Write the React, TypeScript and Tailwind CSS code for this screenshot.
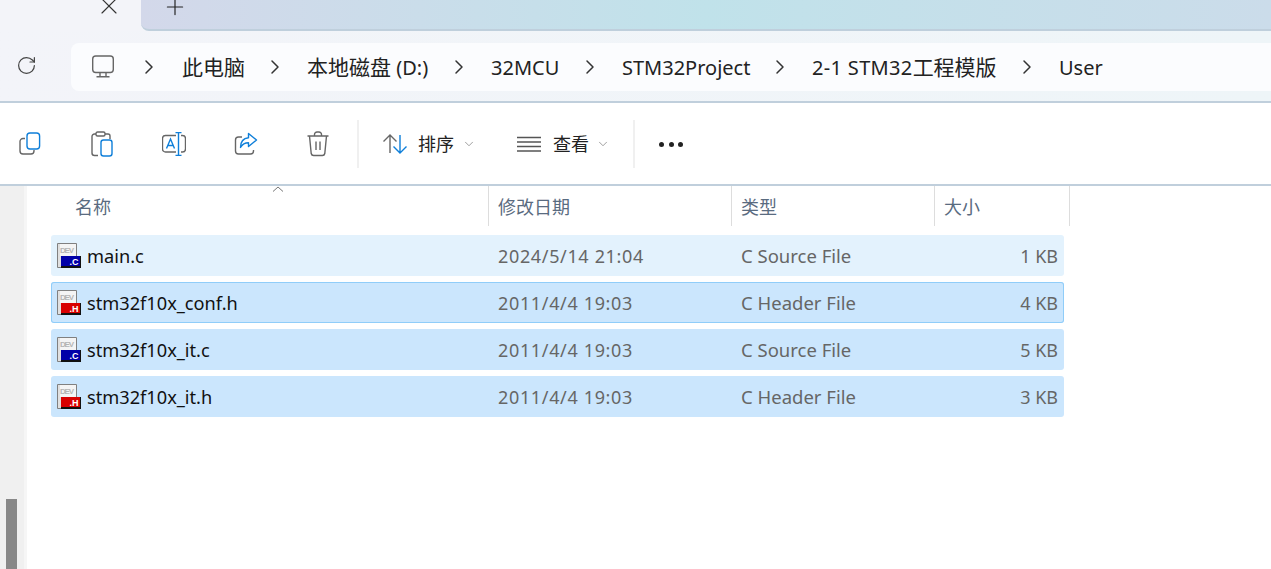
import type { ReactNode } from "react"
import { RotateCw, X, Plus, ChevronRight, ChevronDown } from "lucide-react"

const FONT = "font-['Noto_Sans','Noto_Sans_CJK_SC',sans-serif]"

const crumbs: { label: ReactNode; w: string }[] = [
  { label: <span className="text-[21px]">此电脑</span>, w: "w-[125px]" },
  { label: <><span className="text-[21px]">本地磁盘</span> (D:)</>, w: "w-[184px]" },
  { label: "32MCU", w: "w-[131px]" },
  { label: "STM32Project", w: "w-[190px]" },
  { label: <><span className="tracking-[0.33px]">2-1 STM32</span><span className="text-[21px]">工程模版</span></>, w: "w-[247px]" },
  { label: "User", w: "w-[60px]" },
]

const files = [
  { name: "main.c", date: "2024/5/14 21:04", type: "C Source File", size: "1 KB", kind: "c", state: "hover" },
  { name: "stm32f10x_conf.h", date: "2011/4/4 19:03", type: "C Header File", size: "4 KB", kind: "h", state: "focus" },
  { name: "stm32f10x_it.c", date: "2011/4/4 19:03", type: "C Source File", size: "5 KB", kind: "c", state: "selected" },
  { name: "stm32f10x_it.h", date: "2011/4/4 19:03", type: "C Header File", size: "3 KB", kind: "h", state: "selected" },
]

function PcIcon() {
  return (
    <svg width="24" height="24" viewBox="0 0 24 24" fill="none" stroke="#666" strokeWidth="1.4">
      <rect x="1.7" y="1" width="20.6" height="16.5" rx="3" />
      <path d="M9 17.5v3.5M15 17.5v3.5M5.5 21.7h13" />
    </svg>
  )
}

function CopyIcon() {
  return (
    <svg width="24" height="24" viewBox="0 0 24 24" fill="none" strokeWidth="1.4">
      <path d="M7 6.500H5a3 3 0 0 0-3 3V19a3 3 0 0 0 3 3h8a3 3 0 0 0 3-3v-1" stroke="#666" />
      <rect x="9" y="1" width="12.600" height="16" rx="3" stroke="#0f7fd9" />
    </svg>
  )
}

function PasteIcon() {
  return (
    <svg width="24" height="26" viewBox="0 0 24 26" fill="none" strokeWidth="1.4">
      <path d="M8 24.500H4.500A2.500 2.500 0 0 1 2 22V5.500A2.500 2.500 0 0 1 4.500 3H18a2 2 0 0 1 2 2v3" stroke="#666" />
      <rect x="6" y="1" width="9" height="4" rx="1.500" stroke="#666" fill="#fff" />
      <rect x="11" y="9" width="11" height="16" rx="2.500" stroke="#0f7fd9" />
    </svg>
  )
}

function RenameIcon() {
  return (
    <svg width="24" height="24" viewBox="0 0 24 24" fill="none" strokeWidth="1.4">
      <path d="M14 3.500H3.500a3 3 0 0 0-3 3V17a3 3 0 0 0 3 3H14M19 3.500h1.500a3 3 0 0 1 3 3V17a3 3 0 0 1-3 3H19" stroke="#666" />
      <path d="M16.500 .500v23M13.500 .500h6M13.500 23.500h6" stroke="#0f7fd9" />
      <path d="M4.500 16.500 8.500 7l4 9.500M6 13.500h5" stroke="#0f7fd9" />
    </svg>
  )
}

function ShareIcon() {
  return (
    <svg width="24" height="24" viewBox="0 0 24 24" fill="none" strokeWidth="1.4">
      <path d="M8 5H4.500A3 3 0 0 0 1.500 8v11a3 3 0 0 0 3 3h12a3 3 0 0 0 3-3v-1" stroke="#666" />
      <path d="M14.500 1.500 22.500 8l-8 6.500v-3.700c-3.600 0-6 1.200-8 4.700 0-5.500 3-9.300 8-9.800z" stroke="#0f7fd9" strokeLinejoin="round" />
    </svg>
  )
}

function TrashIcon() {
  return (
    <svg width="24" height="26" viewBox="0 0 24 26" fill="none" stroke="#666" strokeWidth="1.4">
      <path d="M1.500 5h21M8.500 5V3.500A2.500 2.500 0 0 1 11 1h2a2.500 2.500 0 0 1 2.500 2.500V5" />
      <path d="M3.500 5l1.700 17.500a2.500 2.500 0 0 0 2.500 2h8.600a2.500 2.500 0 0 0 2.500-2L20.500 5" />
      <path d="M10 10.500v8.500M14 10.500v8.500" />
    </svg>
  )
}

function SortIcon() {
  return (
    <svg width="24" height="20" viewBox="0 0 24 20" fill="none" strokeWidth="1.4">
      <path d="M7 19V1M.5 7.500 7 1l6.500 6.500" stroke="#666" />
      <path d="M17 1v18M10.500 12.500 17 19l6.500-6.500" stroke="#0f7fd9" />
    </svg>
  )
}

function ListIcon() {
  return (
    <svg width="24" height="16" viewBox="0 0 24 16" fill="none" stroke="#555" strokeWidth="1.3">
      <path d="M0 1.500h24M0 6h24M0 10.500h24M0 15h24" />
    </svg>
  )
}

function FileIcon({ kind }: { kind: string }) {
  const color = kind === "c" ? "#0000a8" : "#d80000"
  return (
    <svg width="24" height="25" viewBox="0 0 24 25" className="shrink-0">
      <path d="M.5.500h19v24H.5z" fill="#e0e0e0" stroke="#808080" />
      <rect x="3" y="1" width="16" height="12" fill="#f4f4f4" />
      <text x="3" y="9.500" fontSize="8" fontWeight="700" fill="#b4b4b4" textLength="14" fontFamily="'Liberation Sans', sans-serif">DEV</text>
      <rect x="4" y="13" width="20" height="10" fill={color} />
      <rect x="4" y="23" width="20" height="2" fill="#111" />
      <rect x="23" y="13" width="1" height="12" fill="#111" />
      <text x="12.500" y="21.500" fontSize="9" fontWeight="700" fill="#fff" fontFamily="'Liberation Sans', sans-serif">.{kind === "c" ? "C" : "H"}</text>
    </svg>
  )
}

function ToolButton({ children }: { children: ReactNode }) {
  return <div className="w-[24px] flex justify-center items-center">{children}</div>
}

export default function App() {
  return (
    <div className={`${FONT} w-[1271px] h-[569px] overflow-hidden bg-white flex flex-col`}>
      {/* Tab strip */}
      <div className="h-[31px] shrink-0 flex bg-[#f3f4f9]">
        <div className="w-[141px] pl-[95px] text-[#333]">
          <X size={28} strokeWidth={1} className="-mt-[8px]" />
        </div>
        <div className="flex-1 pl-[21px] rounded-bl-[8px] border-b-2 border-[#bfcfdc] bg-gradient-to-r from-[#d3d8ea] via-[#c0e2ea] to-[#cbdcea] text-[#222]">
          <Plus size={26} strokeWidth={1.1} className="-mt-[6px]" />
        </div>
      </div>

      {/* Address row */}
      <div className="h-[72px] shrink-0 flex items-start bg-gradient-to-r from-[#f3f4f9] to-[#eef5f8] border-b-2 border-[#c0cfdc]">
        <div className="w-[71px] pt-[24px] pl-[16px] text-[#444]">
          <RotateCw size={21} strokeWidth={1.4} />
        </div>
        <div className="flex-1 mt-[12px] h-[48px] rounded-l-[8px] bg-[#fbfcfe] flex items-center pl-[20px]">
          <div className="w-[46px] flex">
            <PcIcon />
          </div>
          <ChevronRight size={24} strokeWidth={1.5} className="mr-[21px] shrink-0 text-[#333]" />
          <div className="flex items-center text-[20px] text-[#222]">
            {crumbs.map((c, i) => (
              <div key={i} className={`${c.w} flex items-center justify-between pr-[20px] shrink-0`}>
                <span className="whitespace-nowrap pt-[2px]">{c.label}</span>
                {i < crumbs.length - 1 && <ChevronRight size={24} strokeWidth={1.5} className="shrink-0 text-[#333]" />}
              </div>
            ))}
          </div>
        </div>
      </div>

      {/* Command bar */}
      <div className="h-[83px] shrink-0 flex items-center border-b-2 border-[#c0cfdc]">
        <div className="flex items-center gap-[48px] ml-[18px]">
          <ToolButton><CopyIcon /></ToolButton>
          <ToolButton><PasteIcon /></ToolButton>
          <ToolButton><RenameIcon /></ToolButton>
          <ToolButton><ShareIcon /></ToolButton>
          <ToolButton><TrashIcon /></ToolButton>
        </div>
        <div className="w-[2px] h-[48px] bg-[#f0f0f0] ml-[27px]" />
        <div className="flex items-center ml-[24px] text-[18px] text-[#222]">
          <SortIcon />
          <span className="ml-[11px] pt-[2px]">排序</span>
          <ChevronDown size={14} strokeWidth={1.2} className="ml-[8px] text-[#777]" />
        </div>
        <div className="flex items-center ml-[41px] text-[18px] text-[#222]">
          <ListIcon />
          <span className="ml-[12px] pt-[2px]">查看</span>
          <ChevronDown size={14} strokeWidth={1.2} className="ml-[7px] text-[#777]" />
        </div>
        <div className="w-[2px] h-[48px] bg-[#f0f0f0] ml-[23px]" />
        <div className="flex gap-[4.500px] ml-[24px] mt-[2px]">
          <span className="size-[5px] rounded-full bg-[#222]" />
          <span className="size-[5px] rounded-full bg-[#222]" />
          <span className="size-[5px] rounded-full bg-[#222]" />
        </div>
      </div>

      {/* Content */}
      <div className="flex-1 flex min-h-0">
        <div className="w-[24px] shrink-0 bg-[#f0f0f0] flex flex-col justify-end pl-[6px]">
          <div className="w-[11px] h-[70px] bg-[#888888]" />
        </div>
        <div className="w-[3px] shrink-0 bg-[#f6f6f6]" />
        <div className="flex-1">
          {/* Header */}
          <div className="flex h-[40px] items-center text-[18px] text-[#5a6b80]">
            <div className="w-[462px] h-full pl-[48px] pt-[2px] flex items-center relative border-r border-[#dddddd]">
              名称
              <svg width="12" height="6" viewBox="0 0 12 6" fill="none" stroke="#777" className="absolute left-[245px] top-0">
                <path d="M1 5.500l5-4.500 5 4.500" />
              </svg>
            </div>
            <div className="w-[243px] h-full pl-[9px] pt-[2px] flex items-center border-r border-[#dddddd]">修改日期</div>
            <div className="w-[203px] h-full pl-[9px] pt-[2px] flex items-center border-r border-[#dddddd]">类型</div>
            <div className="w-[135px] h-full pl-[9px] pt-[2px] flex items-center border-r border-[#dddddd]">大小</div>
          </div>
          {/* Rows */}
          <div className="mt-[9px] ml-[24px] w-[1013px] flex flex-col gap-[6px]">
            {files.map((f) => (
              <div
                key={f.name}
                className={`h-[41px] flex items-center rounded-[3px] text-[18px] ${
                  f.state === "hover"
                    ? "bg-[#e3f2fd]"
                    : f.state === "focus"
                      ? "bg-[#cbe6fd] shadow-[inset_0_0_0_1px_#90cdf9]"
                      : "bg-[#cbe6fd]"
                }`}
              >
                <div className="w-[447px] flex items-center gap-[6px] pl-[6px] text-[#111]">
                  <FileIcon kind={f.kind} />
                  <span className="text-[18.200px] pt-[2px]">{f.name}</span>
                </div>
                <div className="w-[243px] pt-[2px] text-[#666] tracking-[0.65px]">{f.date}</div>
                <div className="w-[317px] pt-[2px] flex items-center justify-between text-[#666]">
                  <span className="text-[18.500px] mb-[2px]">{f.type}</span>
                  <span>{f.size}</span>
                </div>
              </div>
            ))}
          </div>
        </div>
      </div>
    </div>
  )
}
